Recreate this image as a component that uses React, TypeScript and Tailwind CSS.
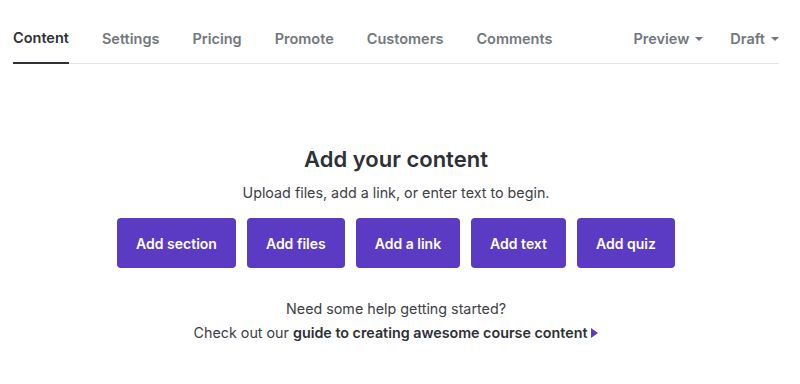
const tabs = ['Settings', 'Pricing', 'Promote', 'Customers', 'Comments']
const actions = ['Add section', 'Add files', 'Add a link', 'Add text', 'Add quiz']

function Caret() {
  return <span className="ml-1.5 inline-block h-0 w-0 border-x-[4px] border-t-[4px] border-x-transparent border-t-current align-middle" />
}

export default function App() {
  return (
    <div className="h-[384px] w-[800px] bg-white text-[#2d3136]" style={{ fontFamily: 'Inter, "Noto Sans", sans-serif' }}>
      <div className="mx-[13px] w-[766px]">
        <nav className="flex h-[64px] items-stretch border-b border-[#e4e4ea]">
          <a className="-mb-px flex items-center border-b-2 border-[#2d3136] pt-[14px] text-[14.5px] font-semibold">Content</a>
          {tabs.map((t) => (
            <a key={t} className="ml-[33px] flex items-center pt-[14px] text-[14.5px] font-semibold text-[#72777d]">
              {t}
            </a>
          ))}
          <div className="ml-auto flex items-center gap-[27px] pt-[14px] text-[14.5px] font-semibold text-[#72777d]">
            <span className="flex items-center">Preview<Caret /></span>
            <span className="flex items-center">Draft<Caret /></span>
          </div>
        </nav>

        <main className="flex flex-col items-center pt-[80px]">
          <h1 className="text-[22px] font-semibold leading-[30px]">Add your content</h1>
          <p className="mt-[9px] text-[14.3px] leading-[20px] text-[#3c4045]">Upload files, add a link, or enter text to begin.</p>
          <div className="mt-[15px] flex gap-[11px]">
            {actions.map((a) => (
              <button key={a} className="h-[50px] rounded-[4px] bg-[#5b3ac4] px-[19px] text-[14px] font-semibold text-white">
                {a}
              </button>
            ))}
          </div>
          <p className="mt-[31px] text-[14.3px] leading-[20px] text-[#3c4045]">Need some help getting started?</p>
          <p className="mt-[4px] flex items-center text-[14.3px] leading-[20px] text-[#3c4045]">
            Check out our&nbsp;<a className="font-semibold text-[#2d3136]">guide to creating awesome course content</a>
            <span className="ml-[4px] inline-block h-0 w-0 border-y-[5px] border-l-[7px] border-y-transparent border-l-[#5b3ac4]" />
          </p>
        </main>
      </div>
    </div>
  )
}
